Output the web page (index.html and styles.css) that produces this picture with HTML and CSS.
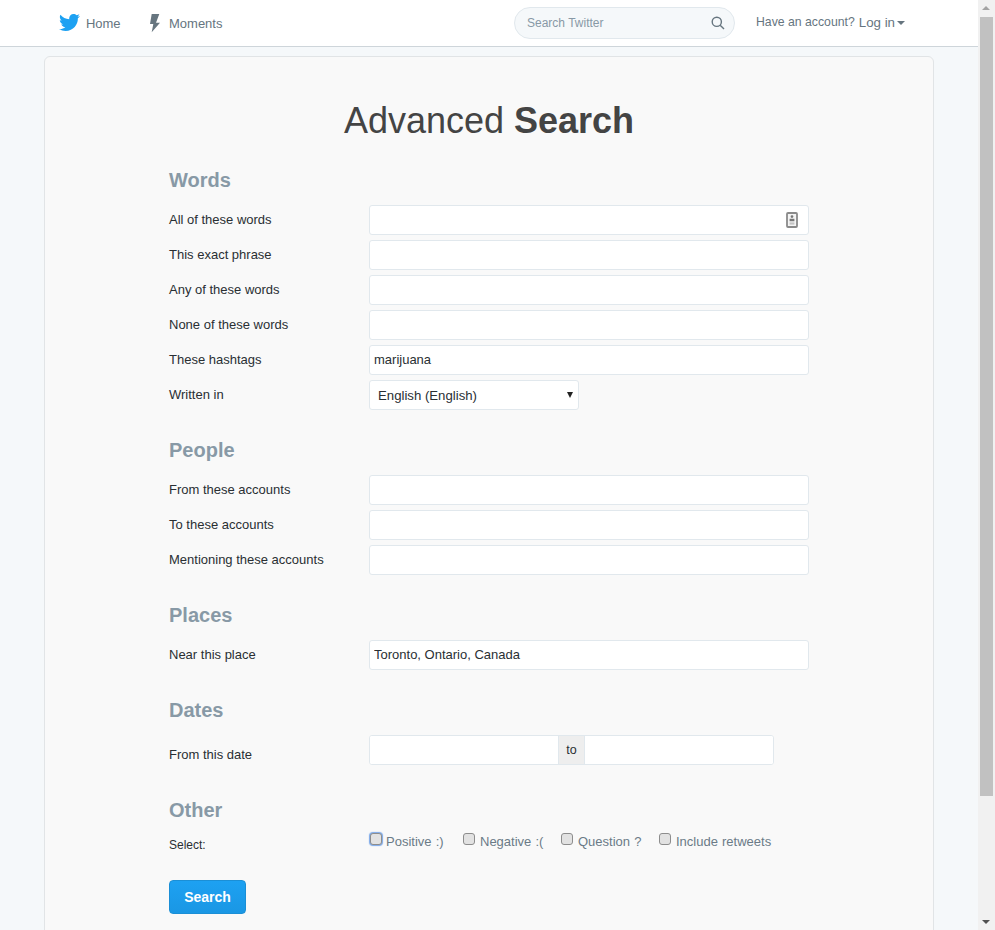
FILE: index.html
```html
<!DOCTYPE html>
<html lang="en">
<head>
<meta charset="utf-8">
<title>Advanced Search</title>
<link rel="stylesheet" href="styles.css">
</head>
<body>
<div class="window">
  <div class="page">
    <header class="topbar">
      <nav class="nav">
        <a class="nav-item nav-home">
          <svg class="bird" viewBox="0 0 24 24" width="21" height="21"><path d="M23.954 4.569c-.885.389-1.83.654-2.825.775 1.014-.611 1.794-1.574 2.163-2.723-.951.555-2.005.959-3.127 1.184-.896-.959-2.173-1.559-3.591-1.559-2.717 0-4.92 2.203-4.92 4.917 0 .39.045.765.127 1.124C7.691 8.094 4.066 6.13 1.64 3.161c-.427.722-.666 1.561-.666 2.475 0 1.71.87 3.213 2.188 4.096-.807-.026-1.566-.248-2.228-.616v.061c0 2.385 1.693 4.374 3.946 4.827-.413.111-.849.171-1.296.171-.314 0-.615-.03-.916-.086.631 1.953 2.445 3.377 4.604 3.417-1.68 1.319-3.809 2.105-6.102 2.105-.39 0-.779-.023-1.17-.067 2.189 1.394 4.768 2.209 7.557 2.209 9.054 0 13.999-7.496 13.999-13.986 0-.209 0-.42-.015-.63.961-.689 1.8-1.56 2.46-2.548l-.047-.02z"/></svg>
          <span>Home</span>
        </a>
        <a class="nav-item nav-moments">
          <svg class="bolt" viewBox="0 0 12 20" width="12" height="20"><path d="M2.7 1h7.6L7 9.7h4L2.7 19.3l1.6-8.3H1z"/></svg>
          <span>Moments</span>
        </a>
      </nav>
      <div class="search">
        <input class="search-input" type="text" placeholder="Search Twitter">
        <svg class="search-icon" viewBox="0 0 14 14" width="14" height="14"><circle cx="5.8" cy="5.8" r="4.6"/><path d="M9.2 9.2l3.8 3.8"/></svg>
      </div>
      <div class="account">
        <span class="account-q">Have an account?</span>
        <a class="login">Log in</a>
        <span class="caret"></span>
      </div>
    </header>
    <main class="card">
      <h1 class="title">Advanced <strong>Search</strong></h1>

      <section class="section section-first">
        <h2 class="heading">Words</h2>
        <div class="row"><label class="label">All of these words</label>
          <div class="field">
            <input class="input" type="text">
            <svg class="contact" viewBox="0 0 12 16" width="12" height="16"><rect x="1" y="1" width="10" height="14" rx="1"/><path class="contact-fig" d="M6 3.2a1.4 1.4 0 1 1 0 2.8 1.4 1.4 0 0 1 0-2.8zM3.6 6.8h4.8v2.4H3.6z"/><path class="contact-low" d="M3.6 10.4h4.8v2.2H3.6z"/></svg>
          </div>
        </div>
        <div class="row"><label class="label">This exact phrase</label><div class="field"><input class="input" type="text"></div></div>
        <div class="row"><label class="label">Any of these words</label><div class="field"><input class="input" type="text"></div></div>
        <div class="row"><label class="label">None of these words</label><div class="field"><input class="input" type="text"></div></div>
        <div class="row"><label class="label">These hashtags</label><div class="field"><input class="input" type="text" value="marijuana"></div></div>
        <div class="row"><label class="label">Written in</label>
          <div class="select-wrap">
            <select class="select"><option>English (English)</option></select>
          </div>
        </div>
      </section>

      <section class="section">
        <h2 class="heading">People</h2>
        <div class="row"><label class="label">From these accounts</label><div class="field"><input class="input" type="text"></div></div>
        <div class="row"><label class="label">To these accounts</label><div class="field"><input class="input" type="text"></div></div>
        <div class="row"><label class="label">Mentioning these accounts</label><div class="field"><input class="input" type="text"></div></div>
      </section>

      <section class="section">
        <h2 class="heading">Places</h2>
        <div class="row"><label class="label">Near this place</label><div class="field"><input class="input" type="text" value="Toronto, Ontario, Canada"></div></div>
      </section>

      <section class="section section-dates">
        <h2 class="heading">Dates</h2>
        <div class="row"><label class="label label-date">From this date</label>
          <div class="dates">
            <input class="date-input date-from" type="text">
            <span class="date-to">to</span>
            <input class="date-input date-until" type="text">
          </div>
        </div>
      </section>

      <section class="section">
        <h2 class="heading">Other</h2>
        <div class="row row-checks"><span class="label label-select">Select:</span>
          <div class="checks">
            <label class="check"><span class="box box-focus"></span>Positive :)</label>
            <label class="check"><span class="box"></span>Negative :(</label>
            <label class="check"><span class="box"></span>Question ?</label>
            <label class="check"><span class="box"></span>Include retweets</label>
          </div>
        </div>
      </section>

      <button class="submit" type="button">Search</button>
    </main>
  </div>
  <div class="scrollbar" aria-hidden="true">
    <span class="arrow arrow-up"></span>
    <span class="thumb"></span>
    <span class="arrow arrow-down"></span>
  </div>
</div>
</body>
</html>
```

FILE: styles.css
```css
* { box-sizing: border-box; }
html, body { margin: 0; height: 100%; overflow: hidden; }
body { font-family: "Liberation Sans", Arial, sans-serif; color: #292f33; }

.window { display: flex; height: 930px; width: 995px; overflow: hidden; }
.page { width: 978px; flex: none; height: 930px; overflow: hidden; background: #f5f8fa; }

/* top bar */
.topbar { display: flex; align-items: flex-start; height: 47px; background: #fff; border-bottom: 1px solid #ced5da; padding-left: 59px; }
.nav { display: flex; width: 455px; flex: none; }
.nav-item { display: flex; align-items: center; height: 46px; font-size: 13px; color: #66757f; }
.nav-home { width: 90px; }
.nav-home span { margin-left: 6px; letter-spacing: -.1px; }
.bird { fill: #1da1f2; margin-top: -1px; }
.nav-moments span { margin-left: 8px; }
.bolt { fill: #66757f; }

.search { position: relative; margin-top: 7px; width: 221px; flex: none; }
.search-input { display: block; width: 100%; height: 32px; padding: 0 30px 0 12px; border: 1px solid #e1e8ed; border-radius: 16px; background: #f5f8fa; font: 12px "Liberation Sans", Arial, sans-serif; color: #292f33; outline: none; }
.search-input::placeholder { color: #8899a6; opacity: 1; }
.search-icon { position: absolute; right: 10px; top: 9px; fill: none; stroke: #66757f; stroke-width: 1.4; }

.account { display: flex; align-items: center; height: 44px; margin-left: 21px; color: #66757f; font-size: 12.25px; }
.login { font-size: 13.3px; margin-left: 4px; }
.caret { width: 0; height: 0; margin-left: 2px; margin-top: 2px; border-left: 4px solid transparent; border-right: 4px solid transparent; border-top: 4px solid #66757f; }

/* card */
.card { width: 890px; margin: 9px 0 0 44px; padding: 44px 124px 60px; background: #f9f9f9; border: 1px solid #e1e4e6; border-radius: 6px; }
.title { margin: 0 0 24px; height: 40px; line-height: 40px; font-size: 36px; font-weight: 400; text-align: center; color: #444; }
.title strong { font-weight: 700; }

.section { margin-top: 25px; }
.section-first { margin-top: 0; }
.heading { margin: 0 0 10px; height: 30px; line-height: 30px; font-size: 20px; font-weight: 700; color: #8899a6; }

.row { display: flex; align-items: center; height: 30px; margin-bottom: 5px; }
.section > .row:last-child { margin-bottom: 0; }
.section-dates { margin-bottom: 30px; }
.label { width: 200px; flex: none; margin-top: -2px; font-size: 13px; color: #292f33; }
.label-date { margin-top: 8px; }

.field { position: relative; width: 440px; }
.input { display: block; width: 100%; height: 30px; padding: 0 4px 2px; border: 1px solid #e1e8ed; border-radius: 3px; background: #fff; font: 13px "Liberation Sans", Arial, sans-serif; color: #292f33; outline: none; }
.contact { position: absolute; right: 11px; top: 7px; }
.contact rect { fill: #f4f4f4; stroke: #8a8a8a; stroke-width: 1.8; }
.contact-fig { fill: #777; }
.contact-low { fill: #c4c4c4; }

.select-wrap { position: relative; width: 210px; }
.select-wrap::after { content: ""; position: absolute; right: 6px; top: 12px; border-left: 3.5px solid transparent; border-right: 3.5px solid transparent; border-top: 6px solid #222; pointer-events: none; }
.select { display: block; width: 100%; height: 30px; padding: 0 8px; appearance: none; border: 1px solid #e1e8ed; border-radius: 3px; background: #fff; font: 13.2px "Liberation Sans", Arial, sans-serif; color: #292f33; outline: none; }

.dates { display: flex; width: 405px; height: 30px; border: 1px solid #e1e8ed; border-radius: 3px; background: #fff; overflow: hidden; }
.date-input { display: block; height: 28px; padding: 0 4px; border: 0; background: #fff; outline: none; }
.date-from { width: 188px; }
.date-until { flex: 1; min-width: 0; }
.date-to { display: flex; align-items: center; justify-content: center; width: 27px; flex: none; background: #eee; border-left: 1px solid #e1e8ed; border-right: 1px solid #e1e8ed; font-size: 12.5px; color: #292f33; }

.row-checks { align-items: flex-start; height: 30px; }
.label-select { margin-top: 1px; height: 18px; line-height: 18px; font-size: 12px; }
.checks { display: grid; grid-template-columns: 94px 98px 98px auto; margin-top: -3px; }
.check { display: flex; align-items: center; height: 18px; font-size: 13px; word-spacing: .5px; color: #6b7b87; }
.box { width: 12px; height: 12px; margin: -4px 5px 0 0; background: #e2e2e2; border: 1px solid #8d8d8d; border-radius: 3px; }
.box-focus { margin-left: 1px; margin-right: 4px; box-shadow: 0 0 1px 1px #7aa7e8; }

.submit { display: block; margin-top: 15px; width: 77px; height: 34px; padding: 0; border: 1px solid #1b8fd6; border-radius: 4px; background: linear-gradient(#1da1f2, #1a97e4); color: #fff; font: 700 14px "Liberation Sans", Arial, sans-serif; }

/* window scrollbar */
.scrollbar { position: relative; width: 17px; flex: none; height: 930px; background: #f1f1f1; }
.thumb { position: absolute; left: 2px; top: 17px; width: 13px; height: 779px; background: #c1c1c1; }
.arrow { position: absolute; left: 4px; width: 0; height: 0; border-left: 4px solid transparent; border-right: 4px solid transparent; }
.arrow-up { top: 6px; border-bottom: 4px solid #a3a3a3; }
.arrow-down { bottom: 6px; border-top: 4px solid #505050; }
```
